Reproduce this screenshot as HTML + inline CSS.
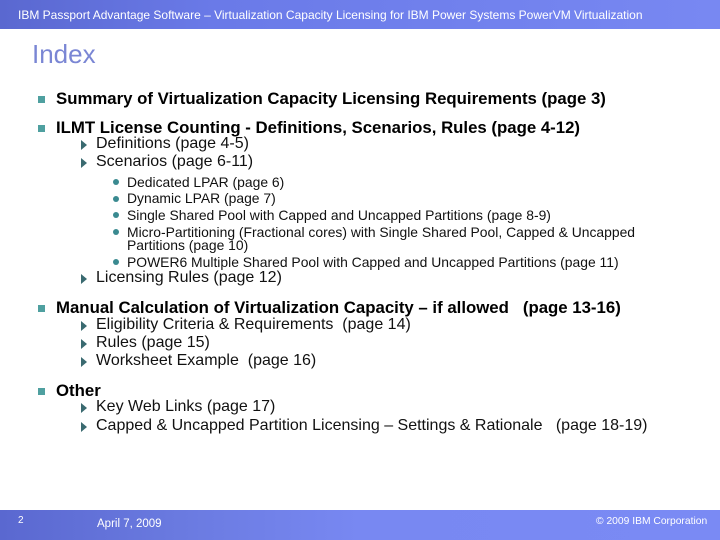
<!DOCTYPE html>
<html><head><style>
body{margin:0;width:720px;height:540px;position:relative;background:#fff;font-family:"Liberation Sans",sans-serif;overflow:hidden}
.t{position:absolute;white-space:nowrap;line-height:1}
.hdr{position:absolute;left:0;top:0;width:720px;height:29px;background:linear-gradient(90deg,#5a68d0 0%,#6a7ae8 30%,#7888f2 100%)}
.ftr{position:absolute;left:0;top:510px;width:720px;height:30px;background:linear-gradient(90deg,#5a68d0 0%,#6a7ae0 25%,#7888f2 50%,#7a8af4 100%)}
.sq{position:absolute;width:7px;height:7px;background:#4fa0a0}
.ar{position:absolute;width:0;height:0;border-top:5px solid transparent;border-bottom:5px solid transparent;border-left:6px solid #3a6a70}
.dot{position:absolute;width:6px;height:6px;border-radius:50%;background:#3a8a90}
.b{font-size:16.8px;font-weight:bold;color:#000}
.m{font-size:16px;color:#111}
.s{font-size:13.9px;color:#111}
</style></head><body>
<div class="hdr"></div>
<div class="t" style="left:18px;top:9px;font-size:12px;color:#fff">IBM Passport Advantage Software – Virtualization Capacity Licensing for IBM Power Systems PowerVM Virtualization</div>
<div class="t" style="left:32px;top:41px;font-size:26px;color:#7a86d4">Index</div>

<div class="sq" style="left:38px;top:96px"></div>
<div class="t b" style="left:56px;top:91px">Summary of Virtualization Capacity Licensing Requirements (page 3)</div>
<div class="sq" style="left:38px;top:125px"></div>
<div class="t b" style="left:56px;top:120px">ILMT License Counting - Definitions, Scenarios, Rules (page 4-12)</div>
<div class="ar" style="left:81px;top:140px"></div>
<div class="t m" style="left:96px;top:136px">Definitions (page 4-5)</div>
<div class="ar" style="left:81px;top:158px"></div>
<div class="t m" style="left:96px;top:154px">Scenarios (page 6-11)</div>
<div class="dot" style="left:113px;top:179px"></div>
<div class="t s" style="left:127px;top:176px">Dedicated LPAR (page 6)</div>
<div class="dot" style="left:113px;top:196px"></div>
<div class="t s" style="left:127px;top:192px">Dynamic LPAR (page 7)</div>
<div class="dot" style="left:113px;top:212px"></div>
<div class="t s" style="left:127px;top:209px">Single Shared Pool with Capped and Uncapped Partitions (page 8-9)</div>
<div class="dot" style="left:113px;top:229px"></div>
<div class="t s" style="left:127px;top:226px">Micro-Partitioning (Fractional cores) with Single Shared Pool, Capped &amp; Uncapped</div>
<div class="t s" style="left:127px;top:239px">Partitions (page 10)</div>
<div class="dot" style="left:113px;top:259px"></div>
<div class="t s" style="left:127px;top:256px">POWER6 Multiple Shared Pool with Capped and Uncapped Partitions (page 11)</div>
<div class="ar" style="left:81px;top:274px"></div>
<div class="t m" style="left:96px;top:270px">Licensing Rules (page 12)</div>

<div class="sq" style="left:38px;top:305px"></div>
<div class="t b" style="left:56px;top:300px">Manual Calculation of Virtualization Capacity – if allowed &nbsp; (page 13-16)</div>
<div class="ar" style="left:81px;top:321px"></div>
<div class="t m" style="left:96px;top:317px">Eligibility Criteria &amp; Requirements &nbsp;(page 14)</div>
<div class="ar" style="left:81px;top:339px"></div>
<div class="t m" style="left:96px;top:335px">Rules (page 15)</div>
<div class="ar" style="left:81px;top:357px"></div>
<div class="t m" style="left:96px;top:353px">Worksheet Example &nbsp;(page 16)</div>

<div class="sq" style="left:38px;top:388px"></div>
<div class="t b" style="left:56px;top:383px">Other</div>
<div class="ar" style="left:81px;top:403px"></div>
<div class="t m" style="left:96px;top:399px">Key Web Links (page 17)</div>
<div class="ar" style="left:81px;top:422px"></div>
<div class="t m" style="left:96px;top:418px">Capped &amp; Uncapped Partition Licensing – Settings &amp; Rationale &nbsp; (page 18-19)</div>

<div class="ftr"></div>
<div class="t" style="left:18px;top:516px;font-size:10px;color:#fff">2</div>
<div class="t" style="left:97px;top:519px;font-size:11.5px;color:#fff">April 7, 2009</div>
<div class="t" style="left:596px;top:517px;font-size:10.3px;color:#fff">© 2009 IBM Corporation</div>
</body></html>
